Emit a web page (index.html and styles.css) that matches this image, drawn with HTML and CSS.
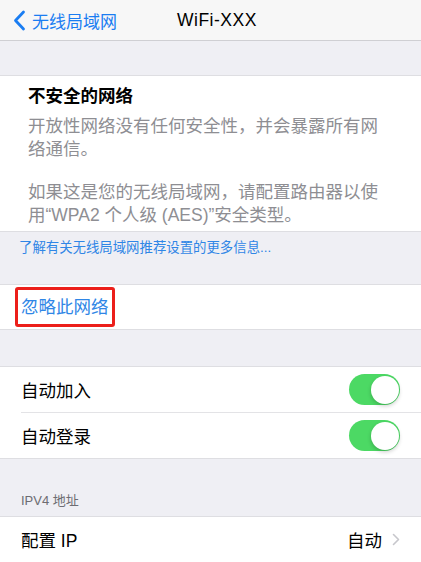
FILE: index.html
```html
<!DOCTYPE html>
<html>
<head>
    <title>WiFi-XXX</title>
    <link rel="stylesheet" href="styles.css">
</head>
<body>
    <header class="nav-bar">
        <a class="back-link" href="#">
            <svg class="back-icon" width="13" height="21" viewBox="0 0 13 21">
                <path d="M10.5 2 L2.5 10.5 L10.5 19" fill="none" stroke="#1a7df2" stroke-width="2.8" stroke-linecap="round" stroke-linejoin="round"/>
            </svg>
            <span>无线局域网</span>
        </a>
        <h1 class="nav-title">WiFi-XXX</h1>
    </header>

    <div class="gap gap-top"></div>

    <section class="group warning">
        <h2 class="warning-title">不安全的网络</h2>
        <p class="warning-text">开放性网络没有任何安全性，并会暴露所有网络通信。</p>
        <p class="warning-text">如果这是您的无线局域网，请配置路由器以使用“WPA2 个人级 (AES)”安全类型。</p>
    </section>

    <div class="gap gap-link">
        <a class="more-link" href="#">了解有关无线局域网推荐设置的更多信息...</a>
    </div>

    <section class="group">
        <div class="row row-forget">
            <span class="forget-label">忽略此网络</span>
        </div>
    </section>

    <div class="gap gap-mid"></div>

    <section class="group">
        <div class="row row-split">
            <span class="row-label">自动加入</span>
            <span class="toggle"><span class="knob"></span></span>
        </div>
        <div class="row">
            <span class="row-label">自动登录</span>
            <span class="toggle"><span class="knob"></span></span>
        </div>
    </section>

    <div class="gap gap-header">
        <span class="group-header">IPV4 地址</span>
    </div>

    <section class="group group-open">
        <div class="row row-split">
            <span class="row-label">配置 IP</span>
            <span class="row-value">
                自动
                <svg class="chevron" width="8" height="13" viewBox="0 0 8 13">
                    <path d="M1.5 1.5 L6.5 6.5 L1.5 11.5" fill="none" stroke="#c7c7cc" stroke-width="1.6" stroke-linecap="round" stroke-linejoin="round"/>
                </svg>
            </span>
        </div>
    </section>
</body>
</html>
```

FILE: styles.css
```css
body {
    margin: 0;
    background-color: #efeff4;
    color: #000;
    font-family: "Liberation Sans", "Noto Sans CJK SC", sans-serif;
}
.nav-bar {
    height: 40px;
    background-color: #f7f7f7;
    border-bottom: 1px solid #cfcfd3;
    display: flex;
    align-items: center;
}
.back-link {
    display: flex;
    align-items: center;
    padding-left: 13px;
    color: #1a7df2;
    text-decoration: none;
    font-size: 17px;
}
.back-icon {
    margin-right: 6px;
}
.nav-title {
    margin: 0 0 0 60px;
    font-size: 17.5px;
    font-weight: 500;
    letter-spacing: 0.5px;
}
.gap-top {
    height: 34px;
}
.group {
    background-color: #fff;
    border-top: 1px solid #dedee2;
    border-bottom: 1px solid #dedee2;
}
.group-open {
    border-bottom: none;
}
.warning {
    padding: 8px 40px 5px 28px;
}
.warning-title {
    margin: 0;
    font-size: 17.5px;
    line-height: 24px;
    font-weight: bold;
}
.warning-text {
    margin: 7px 0 0;
    font-size: 17.5px;
    line-height: 22.5px;
    color: #8e8e93;
}
.warning-text + .warning-text {
    margin-top: 21px;
}
.gap-link {
    height: 52px;
    padding: 6px 0 0 19px;
    box-sizing: border-box;
}
.more-link {
    font-size: 13.4px;
    line-height: 18px;
    color: #2f86e6;
    text-decoration: none;
}
.row {
    height: 45px;
    display: flex;
    align-items: center;
    justify-content: space-between;
    padding: 0 21px;
    font-size: 17.5px;
}
.row-split {
    border-bottom: 1px solid #e3e3e6;
    margin-left: 21px;
    padding-left: 0;
}
.row-forget {
    height: 44px;
    padding-left: 15px;
}
.forget-label {
    height: 40px;
    line-height: 34px;
    box-sizing: border-box;
    padding: 0 3px;
    border: 3px solid #ec1f1a;
    border-radius: 3px;
    color: #2f86e6;
}
.gap-mid {
    height: 36px;
}
.toggle {
    position: relative;
    width: 51px;
    height: 31px;
    border-radius: 16px;
    background-color: #4cd964;
}
.knob {
    position: absolute;
    top: 1.5px;
    right: 1.5px;
    width: 28px;
    height: 28px;
    border-radius: 50%;
    background-color: #fff;
    box-shadow: 0 2px 4px rgba(0, 0, 0, 0.2);
}
.gap-header {
    height: 57px;
    display: flex;
    align-items: flex-end;
    padding: 0 0 6px 21px;
    box-sizing: border-box;
}
.group-header {
    font-size: 13px;
    line-height: 18px;
    color: #6d6d72;
}
.row-value {
    display: flex;
    align-items: center;
    color: #000;
}
.chevron {
    margin-left: 10px;
}
```
